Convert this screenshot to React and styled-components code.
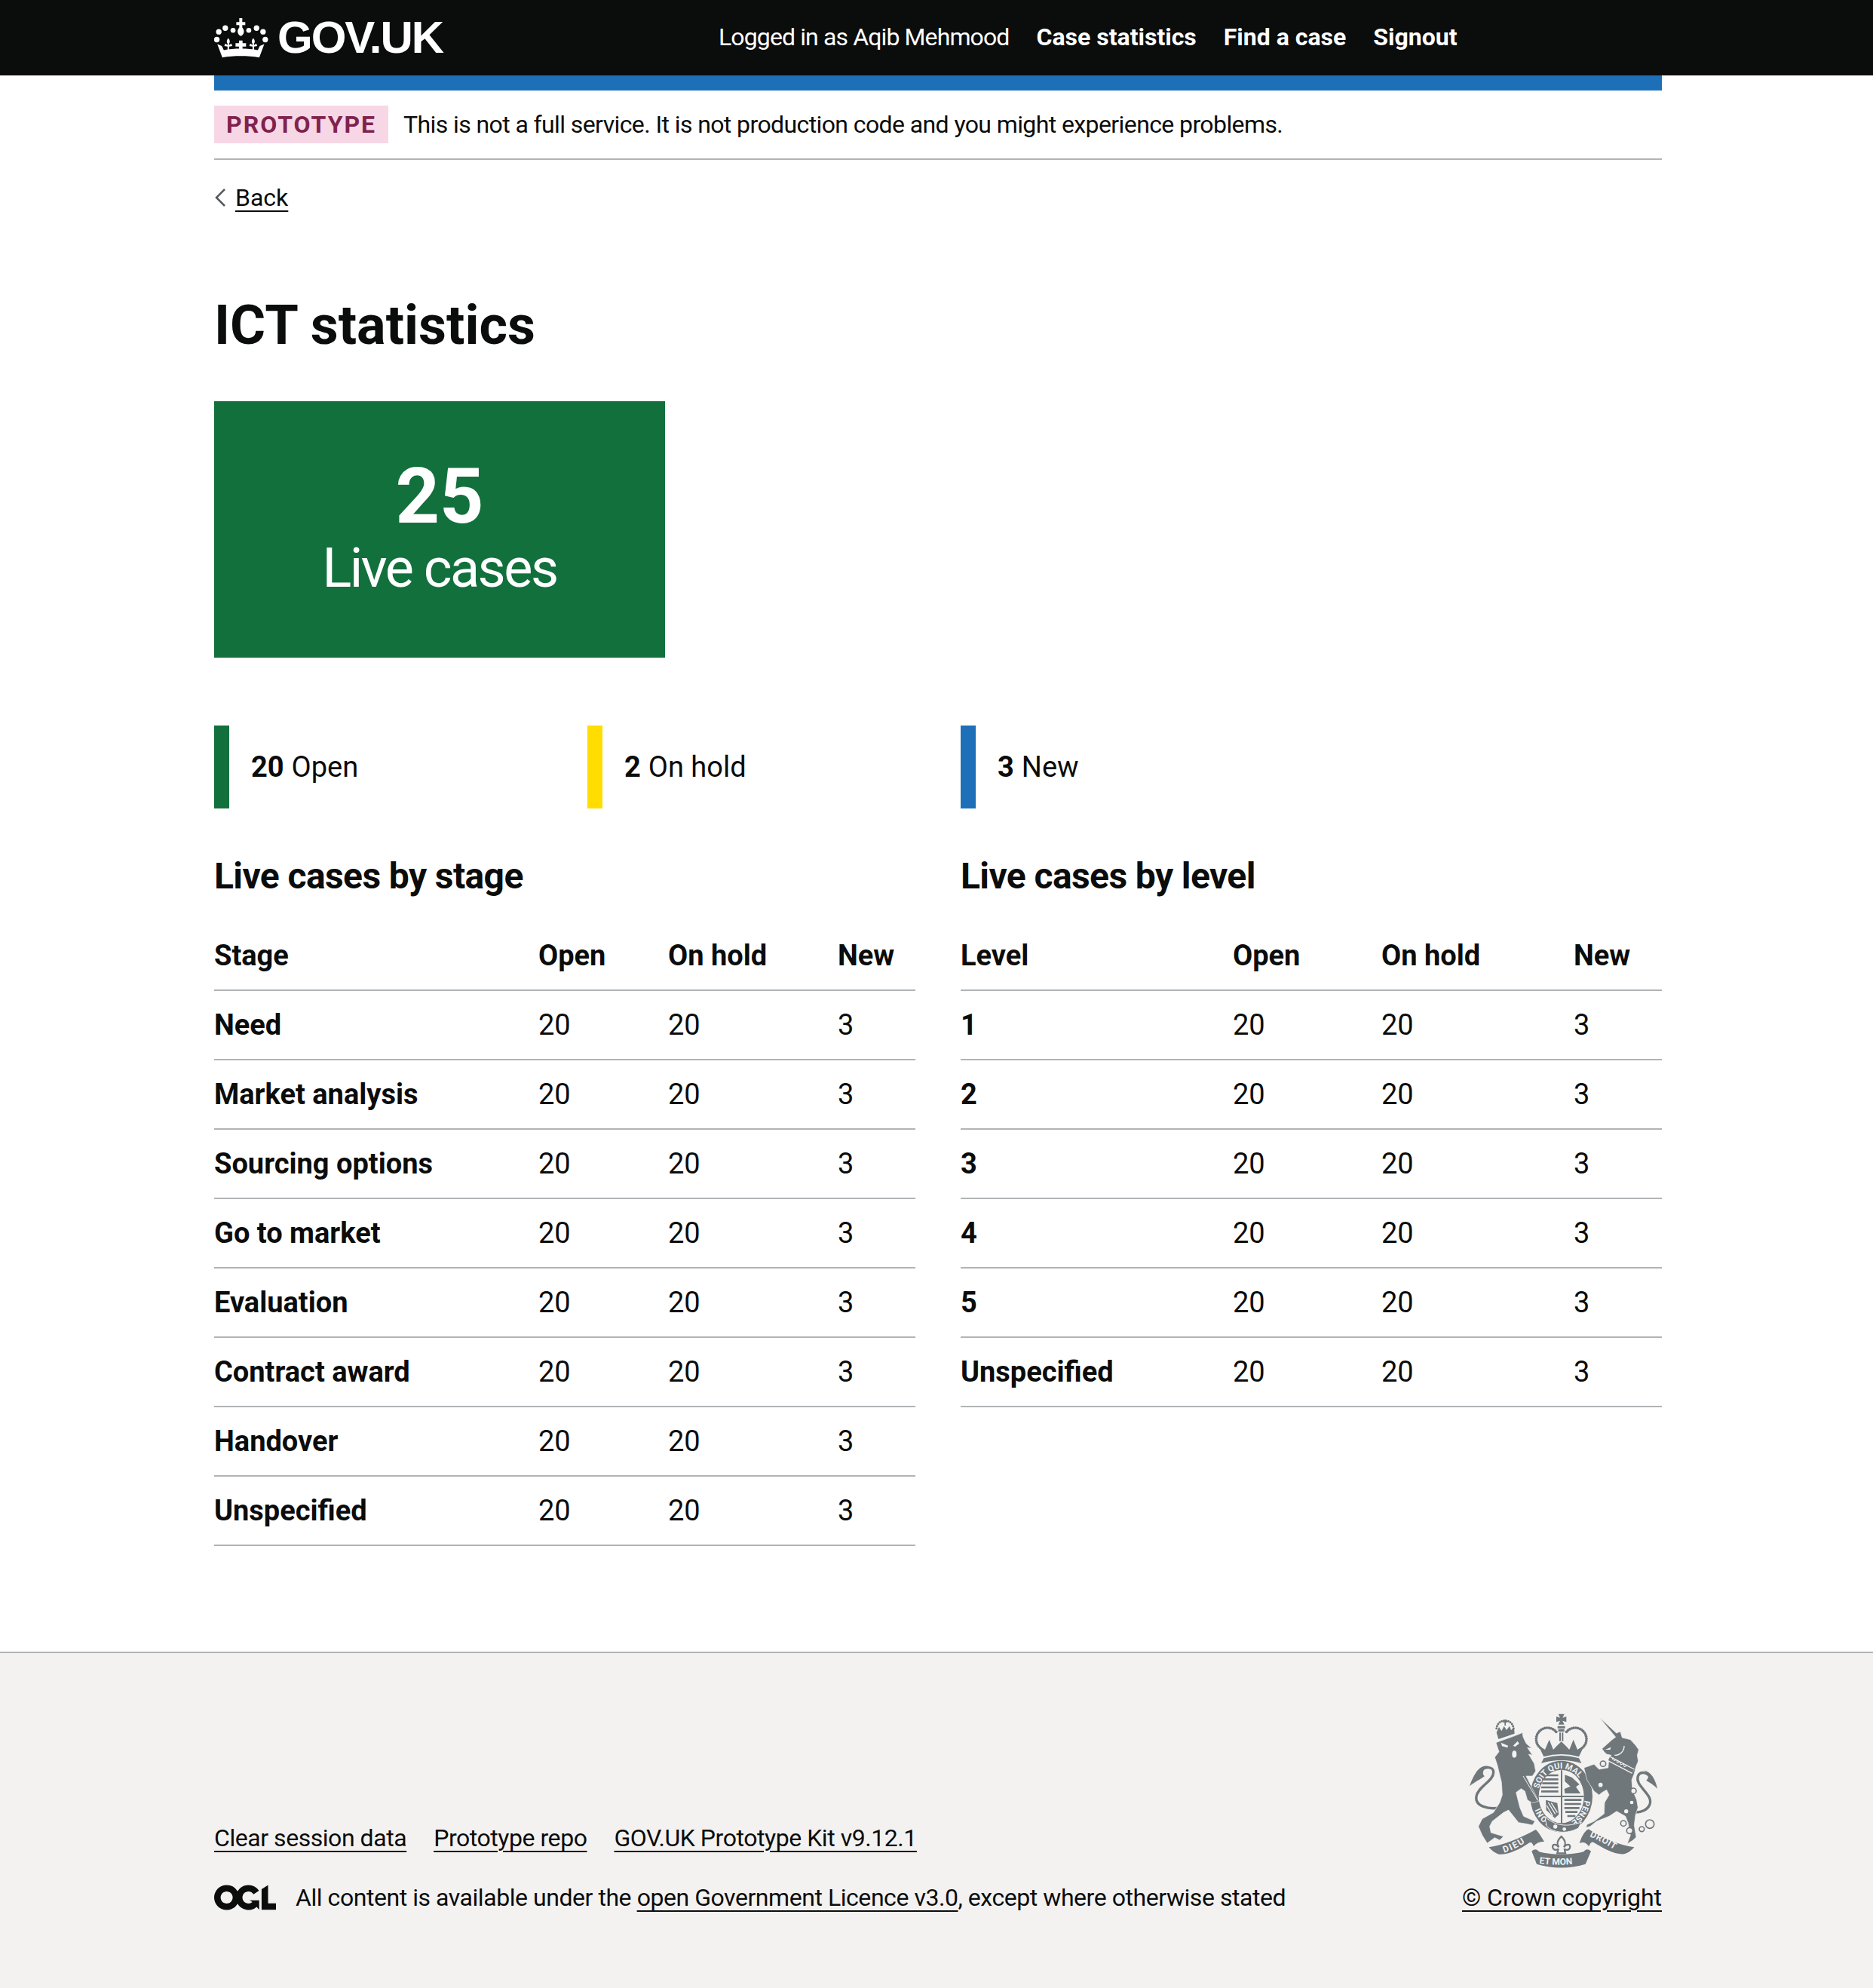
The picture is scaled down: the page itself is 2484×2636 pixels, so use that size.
import React from 'react'
import styled, { createGlobalStyle } from 'styled-components'

const GlobalStyle = createGlobalStyle`
  html, body { margin: 0; padding: 0; background: #fff; }
  body {
    font-family: Roboto, "Liberation Sans", sans-serif;
    color: #0b0c0c;
    font-size: 38px;
    line-height: 50px;
  }
`

const Wrapper = styled.div`
  width: 1920px;
  margin-left: 284px;
`
const HeaderBar = styled.header`
  background: #0b0c0c;
  height: 100px;
`
const HeaderInner = styled(Wrapper)`
  display: flex;
  align-items: center;
  height: 100%;
`
const Logo = styled.a`
  display: flex;
  align-items: center;
  gap: 12px;
  width: 669px;
  color: #fff;
  font: bold 60px/1 "Liberation Sans", sans-serif;
  letter-spacing: -2px;
`
const Nav = styled.nav`
  display: flex;
  gap: 36px;
  font-size: 32px;
  line-height: 40px;
  color: #fff;
  padding-bottom: 2px;
`
const NavItem = styled.span`
  font-weight: ${props => props.bold ? 700 : 400};
  letter-spacing: ${props => props.bold ? '0' : '-0.88px'};
`
const BlueBar = styled(Wrapper)`
  height: 20px;
  background: #1d70b8;
`
const PhaseBanner = styled(Wrapper)`
  display: flex;
  align-items: center;
  gap: 20px;
  height: 90px;
  border-bottom: 2px solid #b1b4b6;
  font-size: 32px;
  letter-spacing: -0.6px;
`
const Tag = styled.strong`
  background: #f7d7e6;
  color: #80224d;
  height: 50px;
  padding: 0 16px;
  display: flex;
  align-items: center;
  font-size: 32px;
  font-weight: 700;
  letter-spacing: 2px;
`
const BackRow = styled.div`
  display: flex;
  align-items: center;
  gap: 12px;
  margin-top: 30px;
  font-size: 32px;
  line-height: 40px;
`
const StyledLink = styled.a`
  color: #0b0c0c;
  text-decoration: underline;
  text-decoration-thickness: 2px;
  text-underline-offset: 6px;
`
const Title = styled.h1`
  margin: 110px 0 0;
  font-size: 72px;
  line-height: 80px;
  font-weight: 700;
`
const Panel = styled.div`
  margin-top: 60px;
  width: 598px;
  height: 340px;
  background: #12703c;
  color: #fff;
  display: flex;
  flex-direction: column;
  align-items: center;
  justify-content: center;
`
const PanelNumber = styled.div`
  font-size: 102px;
  line-height: 104px;
  font-weight: 700;
`
const PanelLabel = styled.div`
  font-size: 72px;
  line-height: 88px;
  letter-spacing: -2.5px;
`
const StatRow = styled.div`
  display: grid;
  grid-template-columns: repeat(4, 1fr);
  column-gap: 60px;
  margin-top: 90px;
`
const Stat = styled.div`
  height: 110px;
  border-left: 20px solid ${props => props.color};
  padding-left: 29px;
  display: flex;
  align-items: center;
  gap: 10px;
`
const Columns = styled.div`
  display: grid;
  grid-template-columns: 930px 930px;
  column-gap: 60px;
  margin-top: 60px;
`
const TableTitle = styled.h2`
  margin: 0 0 30px;
  font-size: 48px;
  line-height: 60px;
  font-weight: 700;
  letter-spacing: -0.6px;
`
const Table = styled.table`
  width: 100%;
  border-collapse: collapse;
  table-layout: fixed;
`
const Th = styled.th`
  text-align: left;
  font-weight: 700;
  padding: 20px 0;
  border-bottom: 2px solid #b1b4b6;
`
const Td = styled.td`
  padding: 20px 0;
  border-bottom: 2px solid #b1b4b6;
`
const Footer = styled.footer`
  margin-top: 140px;
  height: 446px;
  box-sizing: border-box;
  background: #f3f2f1;
  border-top: 2px solid #b1b4b6;
`
const FooterInner = styled(Wrapper)`
  display: flex;
  justify-content: space-between;
  padding-top: 78px;
`
const FooterLeft = styled.div`
  align-self: flex-end;
  font-size: 32px;
  line-height: 40px;
  letter-spacing: -0.45px;
`
const FooterLinks = styled.div`
  display: flex;
  gap: 36px;
  margin-bottom: 39px;
`
const Licence = styled.div`
  display: flex;
  align-items: center;
  gap: 26px;
`
const CrestBlock = styled.div`
  display: flex;
  flex-direction: column;
  align-items: flex-end;
  font-size: 32px;
  line-height: 40px;
  gap: 16px;
`

const stageRows = ['Need', 'Market analysis', 'Sourcing options', 'Go to market', 'Evaluation', 'Contract award', 'Handover', 'Unspecified']
const levelRows = ['1', '2', '3', '4', '5', 'Unspecified']

function CasesTable({ heading, rows, widths }) {
  return (
    <Table>
      <colgroup>
        {widths.map((w, i) => <col key={i} width={w} />)}
      </colgroup>
      <thead>
        <tr>
          <Th>{heading}</Th>
          <Th>Open</Th>
          <Th>On hold</Th>
          <Th>New</Th>
        </tr>
      </thead>
      <tbody>
        {rows.map(r => (
          <tr key={r}>
            <Th as="td">{r}</Th>
            <Td>20</Td>
            <Td>20</Td>
            <Td>3</Td>
          </tr>
        ))}
      </tbody>
    </Table>
  )
}

const fleur = "M0 -24C7 -15 8 -8 3 -2L3 4L12 -2L16 8L3 10L3 26L-3 26L-3 10L-16 8L-12 -2L-3 4L-3 -2C-8 -8 -7 -15 0 -24Z"

function Crown() {
  return (
    <svg width="72" height="53" viewBox="12 18 216 160" fill="#fff">
      <path d="M112 18h12v16h12v12h-12v10c6 8 8 14 6 20-2 8-7 12-12 14-5-2-10-6-12-14-2-6 0-12 6-20V46h-12V34h12z" />
      {[[87, 67, 10], [56, 58, 11], [30, 73, 11], [22, 104, 11], [150, 67, 10], [181, 58, 11], [207, 73, 11], [216, 104, 11]].map(([cx, cy, r]) => (
        <circle key={cx} cx={cx} cy={cy} r={r} />
      ))}
      <path d="M24 122L42 130L50 146C90 138 146 138 186 146L194 130L212 122L192 176C146 168 90 168 44 176Z" />
      <path d={fleur} transform="translate(68 122)" />
      <path d={fleur} transform="translate(168 122)" />
      <path d="M111 108h14v10h14v14h-14v12h-14v-12H97v-14h14z" />
    </svg>
  )
}

function Ogl() {
  return (
    <svg width="82" height="34" viewBox="0 0 483.2 195.7" fill="#0b0c0c">
      <path d="M421.5 142.8V.1l-50.7 32.3v161.1h112.4v-50.7zm-122.3-9.6A47.12 47.12 0 0 1 221 97.8c0-26 21.1-47.1 47.1-47.1 16.7 0 31.4 8.7 39.7 21.8l42.7-27.2A97.63 97.63 0 0 0 268.1 0c-36.5 0-68.3 20.1-85.1 49.7A98 98 0 0 0 97.8 0C43.9 0 0 43.9 0 97.8s43.9 97.8 97.8 97.8c36.5 0 68.3-20.1 85.1-49.7a97.76 97.76 0 0 0 149.6 25.4l19.4 22.2v-74.2h-74.2l21.1 13.9zM97.8 145c-26 0-47.1-21.1-47.1-47.1s21.1-47.2 47.1-47.2 47.2 21 47.2 47S123.8 145 97.8 145" />
    </svg>
  )
}

const crestGrey = '#6f777b'
const crestBg = '#f3f2f1'

function pearls(cx, cy, r, from, to, n, size = 5.5) {
  const out = []
  for (let i = 0; i <= n; i++) {
    const a = (from + (to - from) * i / n) * Math.PI / 180
    out.push(<circle key={i} cx={cx + r * Math.cos(a)} cy={cy + r * Math.sin(a)} r={size} />)
  }
  return out
}

// coordinates taken from a 3x crop, the viewBox shrinks it back
function Crest() {
  return (
    <svg width="260" height="210" viewBox="130 90 780 630" fill={crestGrey}>
      <defs>
        <path id="garterTop" d="M417 425A93 110 0 0 1 603 425" />
        <path id="garterRight" d="M603 425A93 110 0 0 1 510 535" />
        <path id="garterLeft" d="M510 535A93 110 0 0 1 417 425" />
        <path id="ribbonLeft" d="M282 650Q340 632 394 590" />
        <path id="ribbonRight" d="M622 585Q680 610 742 650" />
        <path id="ribbonMid" d="M420 692Q510 705 600 690" />
      </defs>

      {/* lion tail */}
      <path d="M270 470C220 480 165 465 172 425C180 385 240 365 240 330C240 305 205 305 190 325" fill="none" stroke={crestGrey} strokeWidth="10" />
      <path d="M215 305C180 300 160 345 145 385C170 365 185 360 205 345C195 340 195 320 215 305Z" />

      {/* royal crown */}
      <g>{pearls(455, 198, 45, -40, -230, 18)}</g>
      <g>{pearls(565, 198, 45, -140, 50, 18)}</g>
      <path d="M498 98H522L515 113L530 108V130L515 125L522 140H498L505 125L490 130V108L505 113Z" />
      <path d="M495 146h30v9h-30zM498 158h24v10h-24zM502 172h6v34h-6zM512 172h6v34h-6z" />
      <path d="M418 222L445 240L462 200L478 240L492 225L510 208L528 225L542 240L558 200L574 240L602 222L580 268Q510 248 440 268Z" />
      <path d="M440 274Q510 252 580 274L590 294Q510 270 430 294Z" />

      {/* garter ring and shield */}
      <ellipse cx="510" cy="426" rx="124" ry="142" />
      <ellipse cx="510" cy="426" rx="90" ry="106" fill={crestBg} />
      <g fontFamily="Roboto, sans-serif" fontWeight="700" fontSize="33" fill={crestBg}>
        <text><textPath href="#garterTop" startOffset="30">SOIT QUI MAL</textPath></text>
        <text><textPath href="#garterRight" startOffset="16">PENSE</textPath></text>
        <text><textPath href="#garterLeft" startOffset="34">HONI</textPath></text>
      </g>
      <path d="M508 322h6v210h-6zM422 423h178v6H422z" />
      <path d="M452 342h46M440 358h58M434 374h64M430 390h68M430 406h68" stroke={crestGrey} strokeWidth="8" fill="none" />
      <path d="M524 340L552 350L582 378L568 388L586 414H524L522 396L546 386L524 366Z" />
      <path d="M448 440L494 452L500 498L484 512L450 480Z" />
      <path d="M458 450L486 496M470 452L494 490M452 462L476 504" stroke={crestBg} strokeWidth="4" fill="none" />
      <path d="M522 440h68M522 456h66M522 472h60M526 488h48M534 504h32" stroke={crestGrey} strokeWidth="8" fill="none" />

      {/* lion */}
      <path
        d="M250 212C280 200 330 185 355 172L358 190L370 215L392 235L375 232L395 262L380 258L402 295L408 325L395 345L370 345L395 395L420 445L395 452L375 440L365 405L350 395L330 410L345 470L360 505L405 525L395 540L370 535L340 530L320 505L300 480L280 490L235 525L225 545L230 570L280 585L265 600L245 590L215 612L195 580L180 545L195 515L240 490L265 450L275 420L272 370L255 300L245 270L262 248Z"
        stroke={crestBg}
        strokeWidth="2"
        strokeLinejoin="round"
      />
      <path d="M270 212L298 224L296 232L274 226ZM336 206L318 224L326 228L342 216Z" fill={crestBg} />
      <ellipse cx="323" cy="258" rx="9" ry="14" fill={crestBg} />
      <path d="M358 345L416 442" stroke={crestBg} strokeWidth="3" fill="none" />

      {/* lion crown */}
      <g>{pearls(286, 158, 34, 185, 355, 11, 4.5)}</g>
      <path d="M278 126h6v-6h5v6h6v6h-6v12h-5v-12h-6z" />
      <path d="M252 172L262 150L272 166L282 146L292 162L304 146L310 162L322 152L324 176L260 198Z" />

      {/* unicorn tail */}
      <path d="M770 480C815 505 880 475 860 430C840 395 805 375 815 345C825 322 855 332 862 350" fill="none" stroke={crestGrey} strokeWidth="10" />
      <path d="M838 322C868 328 885 360 892 395C872 375 862 372 848 362C862 350 858 335 838 322Z" />

      {/* unicorn */}
      <path
        d="M660 110L729 174L745 168L752 192L785 200L805 222L818 240L812 262L816 285L806 310L800 335L790 360L793 400L810 440L815 470L805 500L800 540L808 588L795 600L772 615L785 580L775 530L765 505L730 485L700 505L650 525L625 545L608 550L612 538L640 525L680 495L682 450L700 420L690 400L672 410L660 420L640 405L612 360L600 312L640 298L660 318L696 312L700 272L708 262L690 258L680 248L672 236L712 200L726 190Z"
        stroke={crestBg}
        strokeWidth="2"
        strokeLinejoin="round"
      />
      <path d="M684 240L708 230L704 240Z" fill={crestBg} />
      <path d="M722 262C745 262 760 245 760 225" fill="none" stroke={crestBg} strokeWidth="4" />
      <path d="M700 276L796 326" fill="none" stroke={crestBg} strokeWidth="22" />
      <path d="M700 276L796 326" fill="none" stroke={crestGrey} strokeWidth="14" />
      <path d="M712 280l4-8 4 12 10-4 2 12 12-4 2 12 12-4 2 12 12-4" fill="none" stroke={crestBg} strokeWidth="3" />

      {/* rings and spots */}
      <g fill={crestBg} stroke={crestGrey} strokeWidth="5">
        <circle cx="676" cy="296" r="11" />
        <circle cx="666" cy="380" r="11" />
        <circle cx="797" cy="404" r="11" />
        <circle cx="757" cy="533" r="11" />
        <circle cx="782" cy="562" r="12" />
        <circle cx="830" cy="556" r="10" />
        <circle cx="862" cy="536" r="17" />
      </g>
      <g fill={crestBg}>
        <circle cx="768" cy="485" r="8" />
        <circle cx="790" cy="450" r="7" />
      </g>

      {/* belt under the shield */}
      <path d="M445 508C490 545 535 548 590 528L578 552C530 578 480 570 452 545Z" stroke={crestBg} strokeWidth="3" />
      <circle cx="486" cy="546" r="8" fill={crestBg} />
      <circle cx="522" cy="556" r="7" fill={crestBg} />

      {/* fleur */}
      <path d="M510 585C528 602 528 618 520 628C532 612 548 616 544 630C540 642 526 640 522 634L526 652H494L498 634C494 640 480 642 476 630C472 616 488 612 500 628C492 618 492 602 510 585Z" fill="none" stroke={crestGrey} strokeWidth="7" />

      {/* ribbons */}
      <path d="M222 628C280 620 350 590 408 558C422 570 432 590 442 606C425 606 410 610 400 625C395 610 388 605 380 612C340 640 290 660 262 656C245 652 232 640 222 628Z" />
      <path d="M800 628C740 620 670 590 618 556C600 565 590 590 582 612C598 606 608 610 620 625C625 610 632 604 640 610C680 635 730 660 760 655C775 652 790 640 800 628Z" />
      <path d="M392 644C400 636 412 632 420 645C470 660 550 660 600 645C608 632 620 636 628 644L606 695C550 714 470 714 412 695Z" />
      <g fontFamily="Roboto, sans-serif" fontWeight="700" fontSize="36" fill={crestBg}>
        <text letterSpacing="5"><textPath href="#ribbonLeft">DIEU</textPath></text>
        <text letterSpacing="2"><textPath href="#ribbonRight">DROIT</textPath></text>
        <text><textPath href="#ribbonMid" startOffset="2">ET MON</textPath></text>
      </g>
    </svg>
  )
}

export default function App() {
  return (
    <>
      <GlobalStyle />
      <HeaderBar>
        <HeaderInner>
          <Logo><Crown />GOV.UK</Logo>
          <Nav>
            <NavItem>Logged in as Aqib Mehmood</NavItem>
            <NavItem bold>Case statistics</NavItem>
            <NavItem bold>Find a case</NavItem>
            <NavItem bold>Signout</NavItem>
          </Nav>
        </HeaderInner>
      </HeaderBar>
      <BlueBar />
      <PhaseBanner>
        <Tag>PROTOTYPE</Tag>
        <span>This is not a full service. It is not production code and you might experience problems.</span>
      </PhaseBanner>
      <Wrapper>
        <BackRow>
          <svg width="16" height="26" viewBox="0 0 16 26" fill="none" stroke="#505a5f" strokeWidth="2.5"><path d="M14 2L3 13l11 11" /></svg>
          <StyledLink>Back</StyledLink>
        </BackRow>
        <Title>ICT statistics</Title>
        <Panel>
          <PanelNumber>25</PanelNumber>
          <PanelLabel>Live cases</PanelLabel>
        </Panel>
        <StatRow>
          <Stat color="#12703c"><strong>20</strong> Open</Stat>
          <Stat color="#ffdd00"><strong>2</strong> On hold</Stat>
          <Stat color="#1d70b8"><strong>3</strong> New</Stat>
        </StatRow>
        <Columns>
          <div>
            <TableTitle>Live cases by stage</TableTitle>
            <CasesTable heading="Stage" rows={stageRows} widths={[430, 172, 225, 103]} />
          </div>
          <div>
            <TableTitle>Live cases by level</TableTitle>
            <CasesTable heading="Level" rows={levelRows} widths={[361, 197, 255, 117]} />
          </div>
        </Columns>
      </Wrapper>
      <Footer>
        <FooterInner>
          <FooterLeft>
            <FooterLinks>
              <StyledLink>Clear session data</StyledLink>
              <StyledLink>Prototype repo</StyledLink>
              <StyledLink>GOV.UK Prototype Kit v9.12.1</StyledLink>
            </FooterLinks>
            <Licence>
              <Ogl />
              <span>All content is available under the <StyledLink>open Government Licence v3.0</StyledLink>, except where otherwise stated</span>
            </Licence>
          </FooterLeft>
          <CrestBlock>
            <Crest />
            <StyledLink>© Crown copyright</StyledLink>
          </CrestBlock>
        </FooterInner>
      </Footer>
    </>
  )
}
